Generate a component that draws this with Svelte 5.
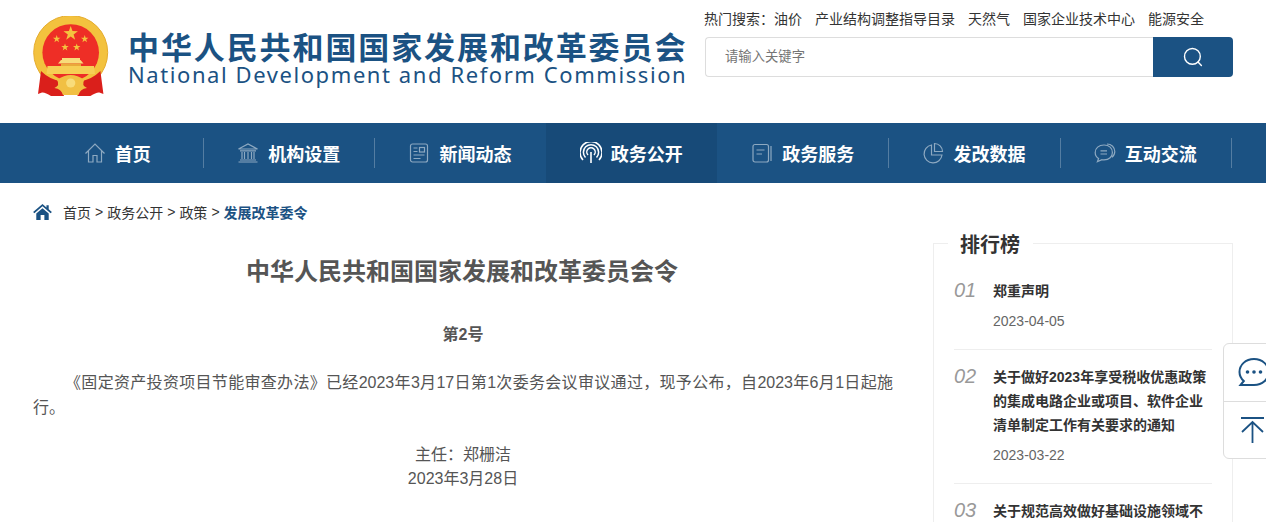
<script>
  const hotWords = ["油价", "产业结构调整指导目录", "天然气", "国家企业技术中心", "能源安全"];

  const navItems = [
    { name: "首页", icon: "home" },
    { name: "机构设置", icon: "bank" },
    { name: "新闻动态", icon: "news" },
    { name: "政务公开", icon: "signal", active: true },
    { name: "政务服务", icon: "book" },
    { name: "发改数据", icon: "pie" },
    { name: "互动交流", icon: "chat" },
  ];

  const ranks = [
    { no: "01", title: "郑重声明", date: "2023-04-05" },
    {
      no: "02",
      title: "关于做好2023年享受税收优惠政策的集成电路企业或项目、软件企业清单制定工作有关要求的通知",
      date: "2023-03-22",
    },
    { no: "03", title: "关于规范高效做好基础设施领域不", date: "" },
  ];

  const smallStars = [
    [23.7, 23],
    [51.7, 23],
    [32, 31.3],
    [43.7, 31.3],
  ];

  // five-pointed star around a centre
  function star(cx, cy, r) {
    const pts = [];
    for (let i = 0; i < 10; i++) {
      const radius = i % 2 ? r * 0.4 : r;
      const a = (Math.PI / 5) * i - Math.PI / 2;
      pts.push(`${(cx + radius * Math.cos(a)).toFixed(2)},${(cy + radius * Math.sin(a)).toFixed(2)}`);
    }
    return pts.join(" ");
  }
</script>

<div class="page">
  <header class="wrap header">
    <div class="brand">
      <svg class="emblem" viewBox="0 0 76 82" width="76" height="82">
        <circle cx="37.7" cy="36.5" r="37" fill="#f3c23e" stroke="#e5ac2e" stroke-width="1" />
        <circle cx="37.7" cy="36.5" r="28.3" fill="#ee2e26" />
        <polygon points={star(37.7, 17.5, 7.6)} fill="#f4c33f" />
        {#each smallStars as [x, y]}
          <polygon points={star(x, y, 3.9)} fill="#f4c33f" />
        {/each}
        <rect x="29" y="42" width="18" height="2.4" fill="#f8dc7a" />
        <path d="M25 47.5 L28 44 H47.5 L50.5 47.5 Z" fill="#f8dc7a" />
        <rect x="28" y="47.5" width="20" height="2.5" fill="#e9a93a" />
        <path d="M14.5 50 H61 L62 58 H13.5 Z" fill="#f6cf55" />
        <path d="M8 55 Q16 63 27 65 L31 80 H18 Q12 76 9 76.5 L5 78 Z" fill="#da1f1b" />
        <path d="M67.4 55 Q59.4 63 48.4 65 L44.4 80 H57.4 Q63.4 76 66.4 76.5 L70.4 78 Z" fill="#da1f1b" />
        <path d="M24 64 Q31 59 37.7 59 Q44.4 59 51.4 64 Q48 69 54 72 Q47 73 45.4 79 H30 Q28.4 73 21.4 72 Q27.4 69 24 64 Z" fill="#f1c043" />
        <circle cx="37.7" cy="67" r="4.6" fill="#f8dc7a" />
      </svg>
      <div class="brand-text">
        <div class="brand-cn">中华人民共和国国家发展和改革委员会</div>
        <div class="brand-en">National Development and Reform Commission</div>
      </div>
    </div>
    <div class="search">
      <div class="hot">
        <span class="hot-label">热门搜索：</span>
        {#each hotWords as word}
          <a href="#top">{word}</a>
        {/each}
      </div>
      <div class="search-box">
        <input type="text" placeholder="请输入关键字" />
        <button aria-label="搜索">
          <svg viewBox="0 0 20 20" width="20" height="20" fill="none" stroke="#fff" stroke-width="1.4">
            <circle cx="9.4" cy="9.4" r="7.9" />
            <path d="M15 15 L18.4 18.6" stroke-linecap="round" />
          </svg>
        </button>
      </div>
    </div>
  </header>

  <nav class="nav">
    <div class="nav-items">
      {#each navItems as item}
        <a class="nav-item" class:active={item.active} href="#top">
          <svg viewBox="0 0 22 22" width="22" height="22" fill="none" stroke="currentColor" stroke-width="1.2">
            {#if item.icon === "home"}
              <path d="M1.5 11.5 L11 2 L20.5 11.5 M4.5 9 V20 H9 V13.5 H13 V20 H17.5 V9" />
            {:else if item.icon === "bank"}
              <path d="M1.5 7 L11 2 L20.5 7 Z M3 8.8 H19 M1.5 20 H20.5 M3 18 H19 M5 10 V17 M7.5 10 V17 M11 10 V17 M14.5 10 V17 M17 10 V17" />
            {:else if item.icon === "news"}
              <rect x="2.5" y="2" width="17" height="18" rx="2" />
              <rect x="11.5" y="5.5" width="5" height="4.5" />
              <path d="M5.5 6 H9.5 M5.5 9.5 H9.5 M5.5 13 H16.5 M5.5 16.5 H12.5" />
            {:else if item.icon === "signal"}
              <path d="M5.5 15.5 A7.6 7.6 0 1 1 16.5 15.5 M3 18 A11 11 0 1 1 19 18 M8 13 A4.2 4.2 0 1 1 14 13" stroke-width="1.5" />
              <path d="M11 10 V21" stroke-width="1.6" />
            {:else if item.icon === "book"}
              <rect x="2" y="2.5" width="15.5" height="17.5" rx="2" />
              <path d="M5.5 8 H13.5 M5.5 12 H11 M20 4 V19" />
            {:else if item.icon === "pie"}
              <path d="M9.5 3 A9 9 0 1 0 20 13 H9.5 Z" />
              <path d="M12.5 1.5 A8 8 0 0 1 20.5 9.5 H12.5 Z" />
            {:else}
              <path d="M10 3 C4.8 3 1.2 6.2 1.2 10.4 C1.2 13 2.6 15.2 4.6 16.4 L3.4 19.6 L8 17.7 C8.7 17.8 9.3 17.9 10 17.9 C15.2 17.9 18.4 14.6 18.4 10.4 C18.4 6.2 15.2 3 10 3 Z" />
              <path d="M13 2 C17.6 2 20.8 5.4 20.8 9.6 C20.8 12 19.8 14 18 15.4 M6.5 8.8 H13 M6.5 12 H13" />
            {/if}
          </svg>
          <span>{item.name}</span>
        </a>
      {/each}
    </div>
  </nav>

  <div class="wrap crumbs">
    <svg viewBox="0 0 20 17" width="19" height="16" fill="#1b5283">
      <path d="M10 0 L14.2 3.6 V1.2 H16.6 V5.7 L20 8.6 L18.6 9.8 L10 2.5 L1.4 9.8 L0 8.6 Z" />
      <path d="M3.4 10 L10 4.4 L16.6 10 V17 H12 V11.6 H8 V17 H3.4 Z" />
    </svg>
    <span>首页</span>
    <span>&gt;</span>
    <span>政务公开</span>
    <span>&gt;</span>
    <span>政策</span>
    <span>&gt;</span>
    <strong>发展改革委令</strong>
  </div>

  <main class="wrap content">
    <article class="article">
      <h1>中华人民共和国国家发展和改革委员会令</h1>
      <p class="number">第2号</p>
      <p class="body">《固定资产投资项目节能审查办法》已经2023年3月17日第1次委务会议审议通过，现予公布，自2023年6月1日起施行。</p>
      <p class="sign">主任：郑栅洁<br />2023年3月28日</p>
    </article>

    <aside class="ranking">
      <h2>排行榜</h2>
      <ul>
        {#each ranks as rank}
          <li>
            <span class="rank-no">{rank.no}</span>
            <div class="rank-main">
              <a href="#top">{rank.title}</a>
              {#if rank.date}
                <time>{rank.date}</time>
              {/if}
            </div>
          </li>
        {/each}
      </ul>
    </aside>
  </main>

  <div class="float-tools">
    <button aria-label="咨询">
      <svg viewBox="0 0 32 32" width="32" height="32" fill="none" stroke="#1b5283" stroke-width="2">
        <path d="M16 2 C24.5 2 30.5 8 30.5 15 C30.5 22.5 24.5 28 16 28 H2.5 L5.8 24 C3 21.6 1.5 18.6 1.5 15 C1.5 8 7.5 2 16 2 Z" />
        <circle cx="9.5" cy="15" r="1.8" fill="#1b5283" stroke="none" />
        <circle cx="16" cy="15" r="1.8" fill="#1b5283" stroke="none" />
        <circle cx="22.5" cy="15" r="1.8" fill="#1b5283" stroke="none" />
      </svg>
    </button>
    <button aria-label="返回顶部">
      <svg viewBox="0 0 23 26" width="23" height="26" fill="none" stroke="#1b5283" stroke-width="1.8">
        <path d="M0 1 H23 M11.5 26 V5 M1 15 L11.5 5 L22 15" />
      </svg>
    </button>
  </div>
</div>

<style>
  :global(body) {
    margin: 0;
    background: #fff;
  }

  .page {
    position: relative;
    height: 522px;
    overflow: hidden;
    font-family: "Liberation Sans", "Noto Sans CJK SC", sans-serif;
    color: #555;
  }

  .wrap {
    width: 1200px;
    margin: 0 auto;
  }

  a {
    color: inherit;
    text-decoration: none;
  }

  .header {
    display: flex;
    justify-content: space-between;
    height: 123px;
  }

  .brand {
    display: flex;
    align-items: flex-start;
    padding-top: 16px;
  }

  .emblem {
    flex: none;
  }

  .brand-text {
    margin-left: 19px;
    padding-top: 14px;
    color: #1b5283;
    font-family: "Noto Sans CJK SC", sans-serif;
    white-space: nowrap;
  }

  .brand-cn {
    font-size: 31px;
    font-weight: 700;
    line-height: 32px;
    letter-spacing: 1.9px;
  }

  .brand-en {
    font-family: "Noto Sans", sans-serif;
    font-size: 22px;
    line-height: 24px;
    letter-spacing: 1.58px;
  }

  .search {
    width: 529px;
    padding-top: 9px;
  }

  .hot {
    display: flex;
    gap: 13px;
    font-size: 14px;
    line-height: 20px;
    color: #333;
    white-space: nowrap;
  }

  .hot-label {
    margin-right: -13px;
  }

  .search-box {
    display: flex;
    height: 40px;
    margin-top: 8px;
    margin-left: 1px;
  }

  .search-box input {
    flex: 1;
    min-width: 0;
    padding: 0 19px 2px;
    border: 1px solid #ddd;
    border-right: none;
    border-radius: 4px 0 0 4px;
    outline: none;
    color: #757575;
    font-family: inherit;
  }

  .search-box button {
    display: flex;
    align-items: center;
    justify-content: center;
    width: 80px;
    border: none;
    border-radius: 0 4px 4px 0;
    background: #1b5283;
  }

  .nav {
    height: 60px;
    background: #1b5283;
  }

  .nav-items {
    display: grid;
    grid-template-columns: repeat(7, 171.33px);
    width: 1202.66px;
    height: 100%;
    margin: 0 auto;
  }

  .nav-item {
    position: relative;
    display: flex;
    align-items: center;
    justify-content: center;
    gap: 9px;
    padding-bottom: 1px;
    color: rgba(255, 255, 255, 0.5);
  }

  .nav-item span {
    color: #fff;
    font-size: 18px;
    font-weight: 700;
  }

  .nav-item::after {
    content: "";
    position: absolute;
    top: 15px;
    right: -1px;
    width: 1px;
    height: 30px;
    background: rgba(255, 255, 255, 0.25);
  }

  .nav-item.active {
    background: #174a78;
    color: #fff;
  }

  .nav-item.active::after {
    display: none;
  }

  .crumbs {
    display: flex;
    align-items: center;
    gap: 4px;
    box-sizing: border-box;
    height: 60px;
    padding-bottom: 2px;
    font-size: 14px;
    color: #333;
  }

  .crumbs svg {
    margin-right: 7px;
  }

  .crumbs strong {
    color: #1b5283;
  }

  .content {
    display: flex;
    justify-content: space-between;
  }

  .article {
    width: 860px;
    font-size: 16px;
    color: #555;
  }

  h1 {
    margin: 11px 2px 0 0;
    font-size: 24px;
    line-height: 36px;
    font-weight: 700;
    text-align: center;
  }

  .number {
    margin: 32px 0 0;
    line-height: 25px;
    font-weight: 700;
    text-align: center;
  }

  .body {
    margin: 23px 0 0;
    line-height: 25px;
    text-indent: 2em;
    text-align: justify;
  }

  .sign {
    margin: 23px 0 0;
    line-height: 24px;
    text-align: center;
  }

  .ranking {
    box-sizing: border-box;
    width: 300px;
    height: 400px;
    padding: 0 20px;
    border: 1px solid #eee;
  }

  h2 {
    display: block;
    width: fit-content;
    margin: -13px 0 0 -6px;
    padding: 0 13px 0 12px;
    background: #fff;
    font-size: 20px;
    line-height: 28px;
    color: #333;
  }

  ul {
    margin: 5px 0 0;
    padding: 0;
    list-style: none;
  }

  li {
    display: flex;
    padding: 15px 0 16px;
    border-bottom: 1px solid #eee;
  }

  .rank-no {
    flex: none;
    width: 39px;
    font-size: 20px;
    line-height: 22px;
    font-style: italic;
    color: #999;
  }

  .rank-main a {
    display: block;
    font-size: 14px;
    line-height: 24px;
    font-weight: 700;
    color: #333;
  }

  .rank-main time {
    display: block;
    margin-top: 6px;
    font-size: 14px;
    line-height: 24px;
    color: #666;
  }

  .float-tools {
    position: absolute;
    top: 343px;
    left: 1223px;
    width: 60px;
    box-sizing: border-box;
    border: 1px solid #ddd;
    border-radius: 6px 0 0 6px;
    background: #fff;
  }

  .float-tools button {
    display: block;
    box-sizing: border-box;
    width: 100%;
    height: 57px;
    padding: 0 0 0 14px;
    border: none;
    background: none;
  }

  .float-tools button + button {
    padding-left: 17px;
    border-top: 1px solid #ddd;
  }

  .float-tools svg {
    display: block;
  }
</style>
